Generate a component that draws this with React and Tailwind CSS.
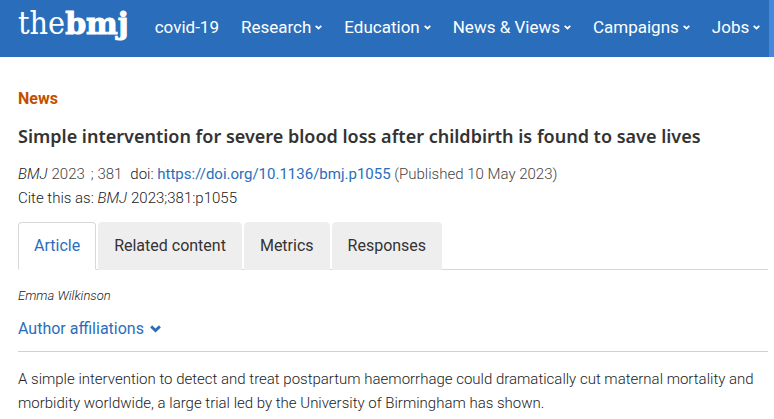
import React, { useState } from 'react';

const NAV_ITEMS = [
  { label: 'covid-19', menu: false },
  { label: 'Research', menu: true },
  { label: 'Education', menu: true },
  { label: 'News & Views', menu: true },
  { label: 'Campaigns', menu: true },
  { label: 'Jobs', menu: true }
];

const TABS = ['Article', 'Related content', 'Metrics', 'Responses'];

function Chevron({ className }) {
  return (
    <svg viewBox="0 0 12 8" className={className} fill="none" stroke="currentColor" strokeWidth="3" aria-hidden="true">
      <path d="M1.2 1.5 6 6l4.8-4.5" />
    </svg>
  );
}

function SiteHeader() {
  return (
    <header className="flex h-[57px] bg-[#2a6ebb] text-white">
      <a href="#home" className="ml-[18px] flex items-baseline pt-[7px] leading-none">
        <span className="font-['DejaVu_Serif_Condensed','DejaVu_Serif',serif] text-[32px] font-extralight">the</span>
        <span className="font-['DejaVu_Serif',serif] text-[30px] font-bold [-webkit-text-stroke:1px_white]">bmj</span>
      </a>
      <nav className="flex flex-1 items-center gap-[22px] pb-0.5 pl-[26px] text-[17px] font-normal">
        {NAV_ITEMS.map((item) =>
          item.menu ? (
            <button key={item.label} type="button" className="flex items-center gap-1 whitespace-nowrap">
              {item.label}
              <Chevron className="w-[7px]" />
            </button>
          ) : (
            <a key={item.label} href="#covid-19" className="whitespace-nowrap">{item.label}</a>
          )
        )}
      </nav>
      <div className="w-[5px] shrink-0 bg-[#4888d8]" />
    </header>
  );
}

function ArticleTabs() {
  const [active, setActive] = useState('Article');

  return (
    <div role="tablist" className="mt-3 flex gap-0.5 border-b border-[#d8d8d8]">
      {TABS.map((tab) => (
        <button
          key={tab}
          type="button"
          role="tab"
          aria-selected={active === tab}
          onClick={() => setActive(tab)}
          className={`-mb-px h-12 rounded-t border px-[15px] text-base font-normal ${
            active === tab
              ? 'border-[#d8d8d8] border-b-white bg-white text-[#2a6ebb]'
              : 'border-[#eee] bg-[#eee] text-[#333]'
          }`}
        >
          {tab}
        </button>
      ))}
    </div>
  );
}

export default function App() {
  return (
    <div className="bg-white font-['Roboto',sans-serif] font-light text-[#222]">
      <SiteHeader />
      <main className="pl-[18px] pr-1.5 pt-[30px]">
        <p className="text-base font-bold text-[#c35000]">News</p>
        <h1 className="mt-[11px] font-['Noto_Sans','Roboto',sans-serif] text-[18px] leading-7 font-semibold text-[#333]">
          Simple intervention for severe blood loss after childbirth is found to save lives
        </h1>
        <div className="mt-3 text-[15px] leading-6">
          <p className="text-[#444]">
            <i className="mr-1 text-[#222]">BMJ</i>
            <span className="mr-1.5">2023</span>
            <span className="mr-2">; 381</span>
            <span className="text-[#222]">doi: </span>
            <a href="https://doi.org/10.1136/bmj.p1055" className="font-normal text-[#2a6ebb]">https://doi.org/10.1136/bmj.p1055</a>
            {' '}(Published 10 May 2023)
          </p>
          <p>
            Cite this as: <i className="mr-1">BMJ</i>2023;381:p1055
          </p>
        </div>
        <ArticleTabs />
        <p className="mt-4 text-[13px] leading-5 italic">Emma Wilkinson</p>
        <button type="button" className="mt-[11px] flex items-center gap-1.5 text-base font-normal text-[#2a6ebb]">
          Author affiliations
          <Chevron className="w-[11px]" />
        </button>
        <hr className="mt-2.5 border-[#d0d0d0]" />
        <p className="mt-[15px] text-[15px] leading-6">
          A simple intervention to detect and treat postpartum haemorrhage could dramatically cut maternal mortality and
          morbidity worldwide, a large trial led by the University of Birmingham has shown.
        </p>
      </main>
    </div>
  );
}
